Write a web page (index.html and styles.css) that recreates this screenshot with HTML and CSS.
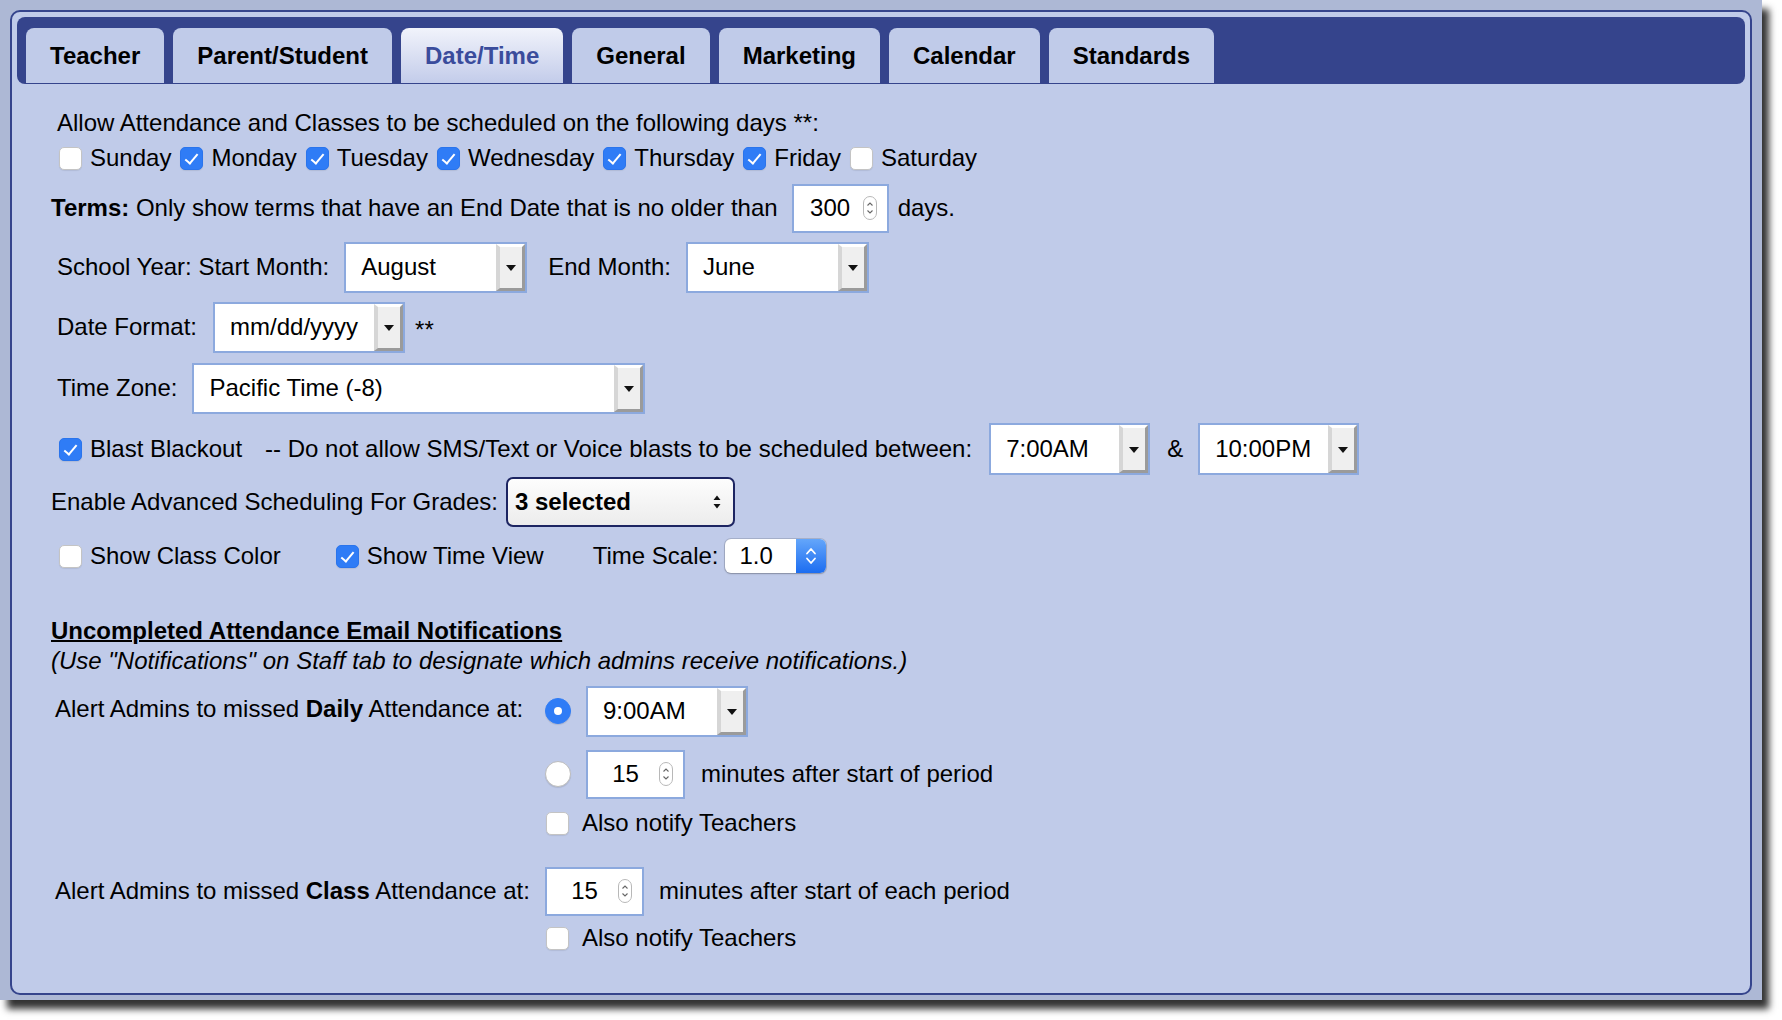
FILE: index.html
```html
<!DOCTYPE html>
<html>
<head>
<meta charset="utf-8">
<link rel="stylesheet" href="styles.css">
</head>
<body>
<div class="frame">
  <div class="panel">
    <div class="tabbar">
      <div class="tab">Teacher</div>
      <div class="tab">Parent/Student</div>
      <div class="tab active">Date/Time</div>
      <div class="tab">General</div>
      <div class="tab">Marketing</div>
      <div class="tab">Calendar</div>
      <div class="tab">Standards</div>
    </div>

    <div class="content">
      <div class="row r-allow ind">Allow Attendance and Classes to be scheduled on the following days **:</div>

      <div class="row r-days cbind">
        <label class="day"><span class="cb"></span><span>Sunday</span></label>
        <label class="day"><span class="cb on"></span><span>Monday</span></label>
        <label class="day"><span class="cb on"></span><span>Tuesday</span></label>
        <label class="day"><span class="cb on"></span><span>Wednesday</span></label>
        <label class="day"><span class="cb on"></span><span>Thursday</span></label>
        <label class="day"><span class="cb on"></span><span>Friday</span></label>
        <label class="day"><span class="cb"></span><span>Saturday</span></label>
      </div>

      <div class="row r-terms">
        <span><b>Terms:</b> Only show terms that have an End Date that is no older than</span>
        <span class="num num-terms"><span class="nv">300</span><svg class="spin" viewBox="0 0 14 24" width="14" height="24"><rect x="0.5" y="0.5" width="13" height="23" rx="6.5" fill="#fff" stroke="#b8b8b8"/><path d="M4.5 9.5 L7 7 L9.5 9.5 M4.5 14.5 L7 17 L9.5 14.5" fill="none" stroke="#666" stroke-width="1.1"/></svg></span>
        <span class="after-num">days.</span>
      </div>

      <div class="row r-year ind">
        <span>School Year: Start Month:</span>
        <span class="sel sel-month ml15"><span class="sv">August</span><span class="sb"></span></span>
        <span class="ml21">End Month:</span>
        <span class="sel sel-month ml15"><span class="sv">June</span><span class="sb"></span></span>
      </div>

      <div class="row r-date ind">
        <span>Date Format:</span>
        <span class="sel sel-date ml16"><span class="sv">mm/dd/yyyy</span><span class="sb"></span></span>
        <span class="stars">**</span>
      </div>

      <div class="row r-tz ind">
        <span>Time Zone:</span>
        <span class="sel sel-tz ml15"><span class="sv">Pacific Time (-8)</span><span class="sb"></span></span>
      </div>

      <div class="row r-blast cbind">
        <label class="day"><span class="cb on"></span><span>Blast Blackout</span></label>
        <span class="ml14">-- Do not allow SMS/Text or Voice blasts to be scheduled between:</span>
        <span class="sel sel-time ml17"><span class="sv">7:00AM</span><span class="sb"></span></span>
        <span class="amp">&amp;</span>
        <span class="sel sel-time ml15"><span class="sv">10:00PM</span><span class="sb"></span></span>
      </div>

      <div class="row r-adv">
        <span>Enable Advanced Scheduling For Grades:</span>
        <span class="msel"><span>3 selected</span><svg viewBox="0 0 8 14" width="8" height="14"><path d="M4 0.5 L7.5 5 L0.5 5 Z M4 13.5 L7.5 9 L0.5 9 Z" fill="#111"/></svg></span>
      </div>

      <div class="row r-show cbind">
        <label class="day"><span class="cb"></span><span>Show Class Color</span></label>
        <label class="day ml-view"><span class="cb on"></span><span>Show Time View</span></label>
        <span class="ml-scale">Time Scale:</span>
        <span class="tsel"><span class="tv">1.0</span><span class="tb"><svg viewBox="0 0 14 24" width="14" height="24"><path d="M3 9.5 L7 5 L11 9.5 M3 14.5 L7 19 L11 14.5" fill="none" stroke="#fff" stroke-width="1.8" stroke-linecap="round" stroke-linejoin="round"/></svg></span></span>
      </div>

      <div class="row r-head"><span class="head">Uncompleted Attendance Email Notifications</span></div>
      <div class="row r-note"><i>(Use "Notifications" on Staff tab to designate which admins receive notifications.)</i></div>

      <div class="alert">
        <div class="alert-label daily-label"><span>Alert Admins to missed <b>Daily</b> Attendance at:</span></div>
        <div class="alert-ctrls">
          <div class="arow a-time">
            <span class="radio on"></span>
            <span class="sel sel-daily ml15"><span class="sv">9:00AM</span><span class="sb"></span></span>
          </div>
          <div class="arow a-min">
            <span class="radio"></span>
            <span class="num num-min ml15"><span class="nv">15</span><svg class="spin" viewBox="0 0 14 24" width="14" height="24"><rect x="0.5" y="0.5" width="13" height="23" rx="6.5" fill="#fff" stroke="#b8b8b8"/><path d="M4.5 9.5 L7 7 L9.5 9.5 M4.5 14.5 L7 17 L9.5 14.5" fill="none" stroke="#666" stroke-width="1.1"/></svg></span>
            <span class="ml16">minutes after start of period</span>
          </div>
          <div class="arow a-notify">
            <label class="day cb1"><span class="cb"></span><span class="ml5">Also notify Teachers</span></label>
          </div>
        </div>
      </div>

      <div class="alert class-alert">
        <div class="alert-label class-label"><span>Alert Admins to missed <b>Class</b> Attendance at:</span></div>
        <div class="alert-ctrls">
          <div class="arow c-min">
            <span class="num num-min"><span class="nv">15</span><svg class="spin" viewBox="0 0 14 24" width="14" height="24"><rect x="0.5" y="0.5" width="13" height="23" rx="6.5" fill="#fff" stroke="#b8b8b8"/><path d="M4.5 9.5 L7 7 L9.5 9.5 M4.5 14.5 L7 17 L9.5 14.5" fill="none" stroke="#666" stroke-width="1.1"/></svg></span>
            <span class="ml15">minutes after start of each period</span>
          </div>
          <div class="arow a-notify">
            <label class="day cb1"><span class="cb"></span><span class="ml5">Also notify Teachers</span></label>
          </div>
        </div>
      </div>
    </div>
  </div>
</div>
</body>
</html>
```

FILE: styles.css
```css
html {
  margin: 0;
  padding: 0;
  background: #ffffff;
  overflow: hidden;
}
body {
  margin: 0;
  padding: 0;
  min-height: 1020px;
  font-family: "Liberation Sans", Arial, sans-serif;
  font-size: 24px;
  color: #000;
}
.frame {
  width: 1762px;
  height: 1000px;
  box-sizing: border-box;
  padding: 10px;
  background: #ADB8D5;
  box-shadow: 7px 9px 7px rgba(0, 0, 0, 0.8);
}
.panel {
  height: 985px;
  box-sizing: border-box;
  border: 2px solid #35448C;
  border-radius: 10px;
  background: #C0CBE9;
}
.tabbar {
  margin: 5px 5px 0;
  height: 67px;
  box-sizing: border-box;
  padding: 11px 9px 1px;
  background: #35448C;
  border-radius: 8px;
  display: flex;
  gap: 9px;
}
.tab {
  height: 55px;
  padding: 0 24px;
  display: flex;
  align-items: center;
  border-radius: 8px 8px 0 0;
  background: #C0CBE9;
  font-weight: bold;
  color: #000;
}
.tab.active {
  background: linear-gradient(#F1F3FB, #C3CCEA);
  color: #3A4C9C;
}
.content {
  padding: 21px 0 0 39px;
}
.row {
  display: flex;
  align-items: center;
  white-space: nowrap;
}
.ind { padding-left: 6px; }
.cbind { padding-left: 8px; }
.r-allow { height: 36px; }
.r-days { height: 34px; }
.r-terms { height: 66px; }
.r-year { height: 52px; }
.r-date { height: 68px; }
.r-tz { height: 54px; }
.r-blast { height: 68px; }
.r-adv { height: 38px; }
.r-show { height: 70px; }
.r-head { height: 34px; margin-top: 23px; }
.r-note { height: 26px; }

.day {
  display: inline-flex;
  align-items: center;
  gap: 8px;
  margin-right: 9px;
}
.cb {
  width: 23px;
  height: 23px;
  box-sizing: border-box;
  border-radius: 5px;
  background: #fff;
  border: 1px solid #C4C4C4;
  box-shadow: 0 1px 1px rgba(0, 0, 0, 0.08);
  position: relative;
  flex: none;
}
.cb.on {
  background: #2F7CF6;
  border-color: #2A74EC;
}
.cb.on::after {
  content: "";
  position: absolute;
  left: 7px;
  top: 3px;
  width: 5px;
  height: 11px;
  border-right: 2px solid #fff;
  border-bottom: 2px solid #fff;
  transform: rotate(40deg);
}
.radio {
  width: 26px;
  height: 26px;
  box-sizing: border-box;
  border-radius: 50%;
  background: #fff;
  border: 1px solid #BDBDBD;
  box-shadow: 0 1px 1px rgba(0, 0, 0, 0.1);
  position: relative;
  flex: none;
}
.radio.on {
  background: #2F7CF6;
  border-color: #2F7CF6;
}
.radio.on::after {
  content: "";
  position: absolute;
  left: 50%;
  top: 50%;
  width: 8px;
  height: 8px;
  margin: -4px 0 0 -4px;
  border-radius: 50%;
  background: #fff;
}

.ml5 { margin-left: 5px; }
.ml14 { margin-left: 14px; }
.ml15 { margin-left: 15px; }
.ml16 { margin-left: 16px; }
.ml17 { margin-left: 17px; }
.ml21 { margin-left: 21px; }
.ml-view { margin-left: 46px; }
.ml-scale { margin-left: 40px; }

/* classic select */
.sel {
  display: inline-flex;
  height: 51px;
  box-sizing: border-box;
  border: 2px solid #8CA9DE;
  background: #fff;
  flex: none;
}
.sv {
  flex: 1;
  display: flex;
  align-items: center;
  padding-left: 15px;
}
.sb {
  width: 22px;
  background: #EFEFEF;
  border-top: 3px solid #fff;
  border-left: 4px solid #D6D6D6;
  border-right: 3px solid #9B9B9B;
  border-bottom: 3px solid #9B9B9B;
  position: relative;
}
.sb::after {
  content: "";
  position: absolute;
  left: 50%;
  top: 50%;
  margin: -2px 0 0 -5px;
  border-left: 5px solid transparent;
  border-right: 5px solid transparent;
  border-top: 6px solid #111;
}
.sel-month { width: 183px; }
.sel-date { width: 192px; }
.sel-tz { width: 453px; }
.sel-time { width: 161px; height: 52px; }
.sel-daily { width: 162px; }
.stars { margin-left: 10px; margin-top: 6px; }
.amp { margin-left: 17px; }

/* number input */
.num {
  display: inline-flex;
  align-items: center;
  height: 49px;
  box-sizing: border-box;
  border: 2px solid #8CA9DE;
  background: #fff;
  flex: none;
  padding-left: 4px;
}
.nv {
  flex: 1;
  text-align: center;
}
.spin {
  margin-right: 10px;
  flex: none;
}
.num-terms { width: 97px; margin-left: 14px; }
.num-min { width: 99px; }
.after-num { margin-left: 9px; }

/* multi select */
.msel {
  width: 229px;
  height: 50px;
  box-sizing: border-box;
  margin-left: 8px;
  border: 2px solid #1D2562;
  border-radius: 7px;
  background: linear-gradient(#FDFDFD, #ECECEC);
  display: flex;
  align-items: center;
  justify-content: space-between;
  padding: 0 12px 0 7px;
  font-weight: bold;
}

/* time scale select */
.tsel {
  display: inline-flex;
  width: 101px;
  height: 34px;
  margin-left: 6px;
  border-radius: 6px;
  background: #fff;
  box-shadow: 0 0 0 1px rgba(0, 0, 0, 0.13), 0 1px 2px rgba(0, 0, 0, 0.2);
  overflow: hidden;
}
.tv {
  flex: 1;
  display: flex;
  align-items: center;
  padding-left: 15px;
}
.tb {
  width: 30px;
  background: linear-gradient(#64A6FA, #1C6DF1);
  display: flex;
  align-items: center;
  justify-content: center;
}

.head {
  font-weight: bold;
  text-decoration: underline;
  text-decoration-thickness: 2px;
}

/* alert blocks */
.alert {
  display: grid;
  grid-template-columns: 490px auto;
  padding-left: 4px;
}
.class-alert { margin-top: 21px; }
.alert-label {
  white-space: nowrap;
  display: flex;
  align-items: center;
}
.daily-label { height: 70px; }
.class-label { height: 48px; }
.arow {
  display: flex;
  align-items: center;
  white-space: nowrap;
}
.a-time { height: 74px; }
.a-min { height: 52px; }
.a-notify { height: 46px; }
.c-min { height: 48px; }
.cb1 { margin-left: 1px; }
```
